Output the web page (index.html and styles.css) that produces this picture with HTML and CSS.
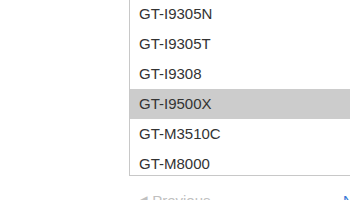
FILE: index.html
```html
<!DOCTYPE html>
<html>
<head>
<meta charset="utf-8">
<link rel="stylesheet" href="styles.css">
</head>
<body>
<div class="page">
  <div class="picker">
    <ul class="list">
      <li class="item">GT-I9305N</li>
      <li class="item">GT-I9305T</li>
      <li class="item">GT-I9308</li>
      <li class="item active">GT-I9500X</li>
      <li class="item">GT-M3510C</li>
      <li class="item">GT-M8000</li>
      <li class="item">GT-M8800</li>
    </ul>
    <div class="pager">
      <span class="prev">&#9664; Previous</span>
      <span class="next">Next &#9654;</span>
    </div>
  </div>
</div>
</body>
</html>
```
FILE: styles.css
```css
html, body {
  margin: 0;
  padding: 0;
  background: #ffffff;
  overflow: hidden;
}
.page {
  width: 350px;
  height: 200px;
  overflow: hidden;
  padding-left: 129px;
  box-sizing: border-box;
  font-family: "Liberation Sans", Arial, sans-serif;
}
.picker {
  width: 300px;
}
.list {
  list-style: none;
  margin: -1px 0 0 0;
  padding: 0;
  height: 176px;
  overflow: hidden;
  border-left: 1px solid #c8c8c8;
  border-bottom: 1px solid #c8c8c8;
}
.item {
  height: 30px;
  line-height: 30px;
  padding-left: 9px;
  font-size: 15px;
  color: #333333;
  white-space: nowrap;
}
.item.active {
  background: #cccccc;
}
.pager {
  display: flex;
  padding: 16px 0 0 7px;
  font-size: 15px;
  line-height: 18px;
  white-space: nowrap;
}
.prev {
  flex: 0 0 207px;
  color: #c0c0c0;
}
.next {
  color: #3a7bd5;
}
```
